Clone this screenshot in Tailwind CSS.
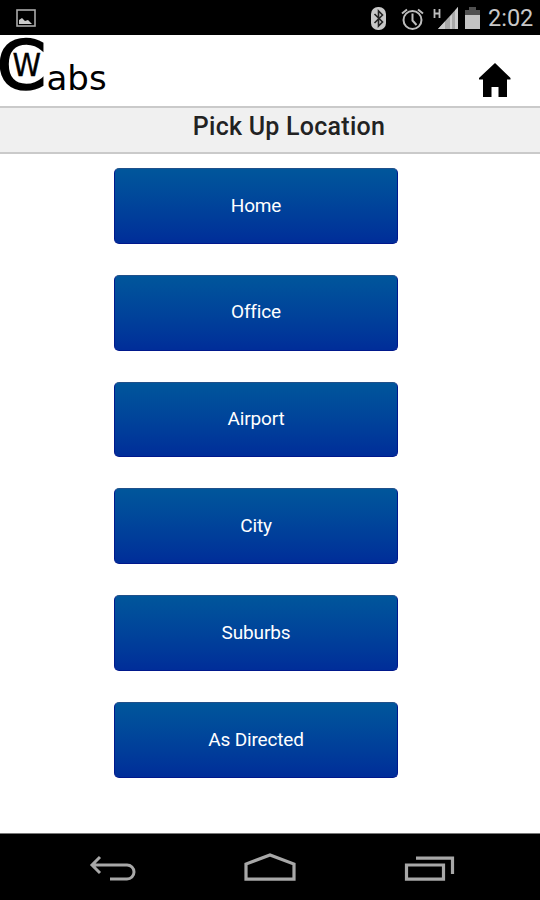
<!DOCTYPE html>
<html lang="en">
<head>
    <meta charset="UTF-8">
    <meta name="viewport" content="width=device-width, initial-scale=1.0">
    <title>Pick Up Location | CW Cabs</title>
    <script src="https://cdn.jsdelivr.net/npm/@tailwindcss/browser@4"></script>
</head>
<body class="bg-white font-['Roboto',sans-serif]">
    <div class="flex flex-col w-[540px] h-[900px] overflow-hidden">

        <!-- Status bar -->
        <div class="h-[35px] shrink-0 bg-black flex items-center justify-between pl-4 pr-2">
            <svg class="w-5 h-[18px]" viewBox="0 0 20 18">
                <rect x="1" y="1" width="18" height="16" fill="none" stroke="#aaa" stroke-width="1.6"/>
                <path d="M3 15v-4l3-2 3 3 3-1 4 4z" fill="#ccc"/>
            </svg>
            <div class="flex items-center">
                <svg class="w-[114px] h-7" viewBox="0 0 114 28">
                    <rect x="2" y="3" width="15" height="23" rx="7" fill="#c8c8c8"/>
                    <path d="M5.500 10l8 8-4 4V7l4 4-8 8" fill="none" stroke="#222" stroke-width="1.600"/>
                    <g fill="none" stroke="#bdbdbd" stroke-width="2">
                        <circle cx="43.500" cy="16" r="9"/>
                        <path d="M43.500 9.500v7l4 4.500M33 9.500l5-4M54 9.500l-5-4"/>
                    </g>
                    <path d="M65.500 5v9M70.500 5v9M65.500 9.500h5" fill="none" stroke="#bdbdbd" stroke-width="1.800"/>
                    <path d="M69 25L89 3v22z" fill="#a8a8a8"/>
                    <path d="M69 25l7-7.500V25zM81 12.500l2-2V25h-2zM86 6.500L89 3v22h-3z" fill="#ccc"/>
                    <path d="M96 12V6h4V3h7v3h4v6z" fill="#505050"/>
                    <path d="M96 11h15v14H96z" fill="#c4c4c4"/>
                </svg>
                <span class="w-[49px] text-[23.5px] leading-none text-[#c8c8c8] whitespace-nowrap pl-[5px] pt-[3px]">2:02</span>
            </div>
        </div>

        <!-- Header -->
        <div class="h-[71px] shrink-0 flex justify-between pr-7">
            <svg class="w-[120px] h-[70px] overflow-visible" viewBox="0 0 120 70" font-family="DejaVu Sans, sans-serif">
                <text x="-3.500" y="53.500" font-size="67" textLength="50" lengthAdjust="spacingAndGlyphs" stroke="#000" stroke-width="1.600">C</text>
                <text x="12.500" y="40.500" font-size="31.500" textLength="28.500" lengthAdjust="spacingAndGlyphs" stroke="#000" stroke-width=".4">W</text>
                <text x="46.500" y="55" font-size="34">abs</text>
            </svg>
            <svg class="w-[34px] h-[36px] mt-[27px]" viewBox="0 0 34 36">
                <path d="M17 1l15.500 15v1.500H29V35h-8.500V25h-7v10H5V17.500H1V16z"/>
            </svg>
        </div>

        <!-- Title -->
        <div class="h-12 shrink-0 bg-[#f0f0f0] border-y-2 border-[#cacaca] flex justify-center pl-[38px]">
            <h1 class="text-[25px] leading-[38px] font-medium text-[#222] tracking-[0.25px] whitespace-nowrap">Pick Up Location</h1>
        </div>

        <!-- Locations -->
        <div class="grow flex flex-col gap-[31px] pt-3.5 pl-[114px]">
            <button class="w-[284px] h-[75.8px] shrink-0 rounded-[5px] border border-[#00188c] border-t-[#20508a] bg-linear-to-b from-[#00569b] to-[#002d99] text-white text-[19px] tracking-[-0.15px]">Home</button>
            <button class="w-[284px] h-[75.8px] shrink-0 rounded-[5px] border border-[#00188c] border-t-[#20508a] bg-linear-to-b from-[#00569b] to-[#002d99] text-white text-[19px] tracking-[-0.15px]">Office</button>
            <button class="w-[284px] h-[75.8px] shrink-0 rounded-[5px] border border-[#00188c] border-t-[#20508a] bg-linear-to-b from-[#00569b] to-[#002d99] text-white text-[19px] tracking-[-0.15px]">Airport</button>
            <button class="w-[284px] h-[75.8px] shrink-0 rounded-[5px] border border-[#00188c] border-t-[#20508a] bg-linear-to-b from-[#00569b] to-[#002d99] text-white text-[19px] tracking-[-0.15px]">City</button>
            <button class="w-[284px] h-[75.8px] shrink-0 rounded-[5px] border border-[#00188c] border-t-[#20508a] bg-linear-to-b from-[#00569b] to-[#002d99] text-white text-[19px] tracking-[-0.15px]">Suburbs</button>
            <button class="w-[284px] h-[75.8px] shrink-0 rounded-[5px] border border-[#00188c] border-t-[#20508a] bg-linear-to-b from-[#00569b] to-[#002d99] text-white text-[19px] tracking-[-0.15px]">As Directed</button>
        </div>

        <!-- Navigation bar -->
        <div class="h-[67px] shrink-0 bg-black border-t border-[#777] flex justify-between pl-[88px] pr-[85px] pt-[19px]">
            <svg class="w-12 h-8" viewBox="0 0 48 32" fill="none" stroke="#a8a8a8" stroke-width="3">
                <path d="M12 4L4 12l8 8M4 12h35a7 7 0 0 1 0 14H22"/>
            </svg>
            <svg class="w-[52px] h-8" viewBox="0 0 52 32" fill="none" stroke="#a8a8a8" stroke-width="3.200">
                <path d="M2 26.200V11L26 2l24 9v15.200z"/>
            </svg>
            <svg class="w-[51px] h-8" viewBox="0 0 51 32" fill="none" stroke="#a8a8a8" stroke-width="3.200">
                <path d="M2.500 12h37v14.200h-37zM12 5.200h36.500V21"/>
            </svg>
        </div>
    </div>
</body>
</html>
